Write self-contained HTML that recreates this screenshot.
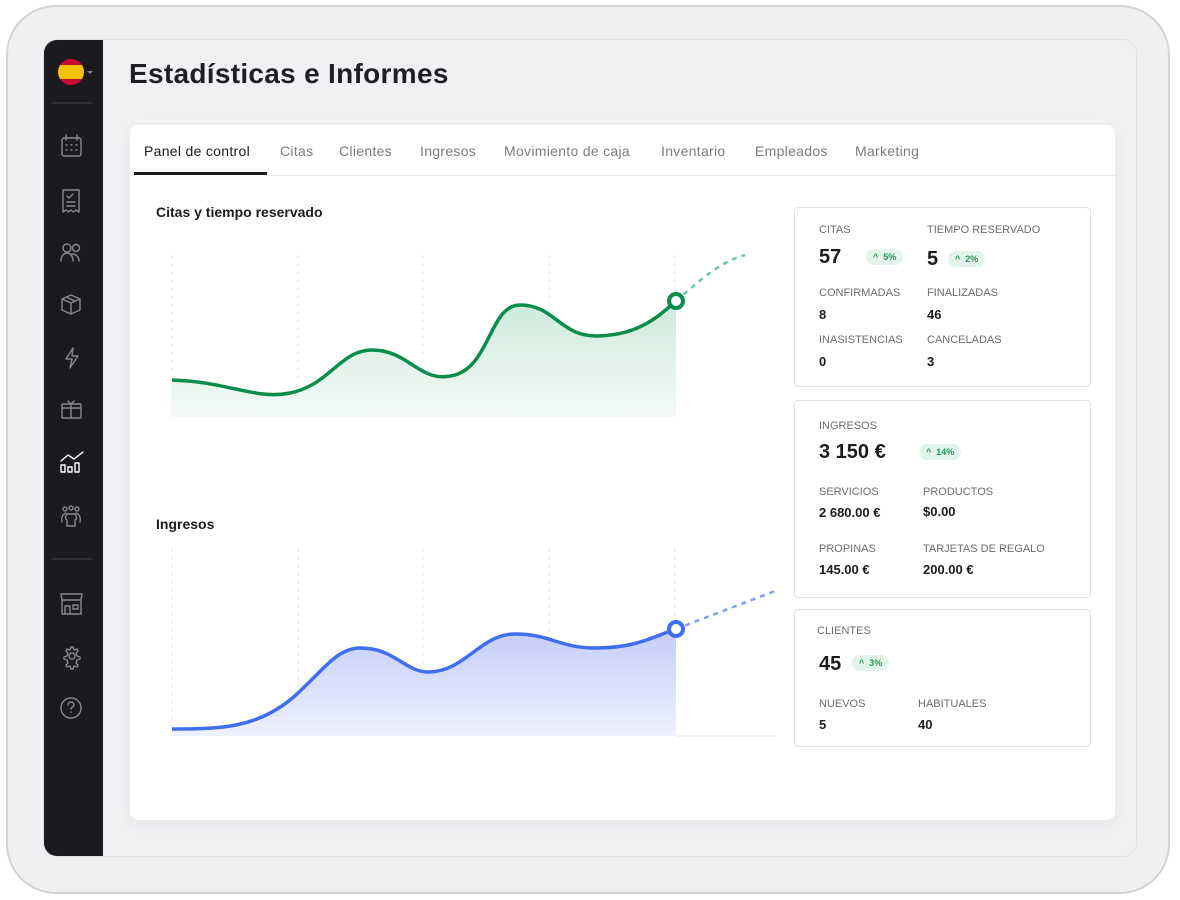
<!DOCTYPE html>
<html><head><meta charset="utf-8"><style>
*{margin:0;padding:0;box-sizing:border-box}
body{width:1180px;height:900px;background:#fff;font-family:"Liberation Sans",sans-serif;position:relative;overflow:hidden;color:#1c1b1f}
.dev{position:absolute;left:6px;top:5px;width:1164px;height:889px;border-radius:50px;background:#f1eff2;border:2px solid #d6d3d6}
.scr{position:absolute;left:43px;top:39px;width:1094px;height:818px;border-radius:14px;background:#f2f0f3;overflow:hidden;border:1px solid #e4e2e5}
.side{position:absolute;left:0;top:0;width:59px;height:818px;background:#1b1a1f}
.a{position:absolute}
h1{position:absolute;left:129px;top:58px;font-size:28px;font-weight:bold;color:#1f1e22;letter-spacing:0.3px}
.card{position:absolute;left:130px;top:125px;width:985px;height:695px;background:#fff;border-radius:8px;box-shadow:0 4px 14px rgba(0,0,0,.05)}
.tab{position:absolute;top:143px;font-size:14px;color:#7c7a80;letter-spacing:0.3px}
.box{position:absolute;left:794px;width:297px;background:#fff;border:1px solid #e2e0e3;border-radius:4px}
.l{position:absolute;font-size:11px;color:#6d6b70}
.v{position:absolute;font-size:13px;font-weight:bold;color:#1c1b1f}
.big{position:absolute;font-size:20px;font-weight:bold}
.pill{position:absolute;height:16px;border-radius:8px;background:#e3f4ea;color:#1f9a55;font-size:9px;font-weight:bold;line-height:16px;padding:0 7px}
</style></head><body>
<div class="dev"></div>
<div class="scr"><div class="side"></div></div>
<svg class="a" style="left:0;top:0" width="1180" height="900" fill="none" stroke="#8a8890" stroke-width="1.4" stroke-linecap="round" stroke-linejoin="round">
<defs><clipPath id="fc"><circle cx="71" cy="72" r="13"/></clipPath></defs>
<g clip-path="url(#fc)" stroke="none"><rect x="56" y="57" width="30" height="30" fill="#c8102e"/><rect x="56" y="65" width="30" height="14" fill="#f4c300"/></g>
<path d="M87 71l3 3 3-3z" fill="#888" stroke="none"/>
<line x1="53" y1="103" x2="91" y2="103" stroke="#444" stroke-width="1"/>
<rect x="62" y="138" width="19" height="18" rx="2"/><path d="M66 135v5M77 135v5M66 145h1M71 145h1M76 145h1M66 150h1M71 150h1M76 150h1"/>
<path d="M63 190h16v22l-3-2-2.5 2-2.5-2-2.5 2-2.5-2-3 2zM67 196l2 2 4-4M67 202h8M67 206h8"/>
<circle cx="67" cy="248" r="4"/><circle cx="76" cy="248" r="3.5"/><path d="M61 261c0-5 3-8 6-8s6 3 6 8M72 254c4 0 7 3 7 7"/>
<path d="M71 295l9 4v11l-9 4-9-4v-11zM62 299l9 4 9-4M71 303v11M66 297l9 4"/>
<path d="M73 348l-7 11h6l-2 9 8-12h-6z"/>
<rect x="62" y="404" width="19" height="14" rx="1"/><path d="M62 408h19M71 404v14M68 401l3 3 3-3"/>
<path d="M61 461l7-6 6 4 9-7" stroke="#fff"/><rect x="61" y="465" width="4" height="7" stroke="#fff"/><rect x="68" y="467" width="4" height="5" stroke="#fff"/><rect x="75" y="463" width="4" height="9" stroke="#fff"/>
<circle cx="65" cy="509" r="2"/><circle cx="71" cy="508" r="2"/><circle cx="77" cy="509" r="2"/><path d="M62 522c-1-5 1-8 4-9M80 522c1-5-1-8-4-9M67 526v-6c-2-1-2-4 0-6h8c2 2 2 5 0 6v6z"/>
<line x1="53" y1="559" x2="91" y2="559" stroke="#444" stroke-width="1"/>
<path d="M62 600v14h19v-14M61 594h21l-1 6H62zM65 614v-8h5v8M73 605h5v4h-5z"/>
<path d="M71 647l2 0 1 3 3-1 1 2-2 2 1 3 3 1v2l-3 1-1 3 2 2-1 2-3-1-1 3h-2l-1-3-3 1-1-2 2-2-1-3-3-1v-2l3-1 1-3-2-2 1-2 3 1z"/><circle cx="72" cy="656" r="3"/>
<circle cx="71" cy="708" r="10"/><path d="M68 705c0-2 1.5-3 3-3s3 1 3 3-3 2-3 4M71 712v.5"/>
</svg>
<h1>Estadísticas e Informes</h1>
<div class="card"></div>
<div class="tab" style="left:144px;color:#1c1b1f">Panel de control</div>
<div class="a" style="left:134px;top:172px;width:133px;height:3px;background:#1c1b1f"></div>
<div class="a" style="left:267px;top:175px;width:848px;height:1px;background:#ebe9ec"></div>
<div class="tab" style="left:280px">Citas</div>
<div class="tab" style="left:339px">Clientes</div>
<div class="tab" style="left:420px">Ingresos</div>
<div class="tab" style="left:504px">Movimiento de caja</div>
<div class="tab" style="left:661px">Inventario</div>
<div class="tab" style="left:755px">Empleados</div>
<div class="tab" style="left:855px">Marketing</div>
<div class="a" style="left:156px;top:204px;font-size:14px;font-weight:bold">Citas y tiempo reservado</div>
<div class="a" style="left:156px;top:516px;font-size:14px;font-weight:bold">Ingresos</div>
<svg class="a" style="left:0;top:0" width="1180" height="900">
<defs>
<linearGradient id="g1" x1="0" y1="0" x2="0" y2="1"><stop offset="0" stop-color="#cde9dc"/><stop offset="1" stop-color="#f4faf7"/></linearGradient>
<linearGradient id="g2" x1="0" y1="0" x2="0" y2="1"><stop offset="0" stop-color="#c4cdfb"/><stop offset="1" stop-color="#eef1fe"/></linearGradient>
</defs>
<g stroke="#e4e4e8" stroke-dasharray="4 4">
<path d="M172 255v162M298 255v162M423 255v162M549 255v162M675 255v162"/>
<path d="M172 548v188M298 548v188M423 548v188M549 548v188M675 548v188"/>
</g>
<path d="M172 380C230 382 255 400 290 393C330 385 340 350 372 350C410 350 420 385 455 375C490 365 490 305 520 305C555 305 560 337 598 336C640 335 660 315 676 301V417H172Z" fill="url(#g1)"/>
<path d="M172 380C230 382 255 400 290 393C330 385 340 350 372 350C410 350 420 385 455 375C490 365 490 305 520 305C555 305 560 337 598 336C640 335 660 315 676 301" fill="none" stroke="#0a8c4a" stroke-width="3.5"/>
<path d="M676 301C700 280 720 262 745 255" fill="none" stroke="#6cc7a0" stroke-width="2.5" stroke-dasharray="5 5"/>
<circle cx="676" cy="301" r="7" fill="#fff" stroke="#0a8c4a" stroke-width="4"/>
<path d="M172 729C220 729 255 728 290 700C320 675 335 648 360 648C395 648 405 672 428 672C465 672 480 634 515 634C550 634 560 648 595 648C635 648 650 638 676 629V736H172Z" fill="url(#g2)"/>
<path d="M172 729C220 729 255 728 290 700C320 675 335 648 360 648C395 648 405 672 428 672C465 672 480 634 515 634C550 634 560 648 595 648C635 648 650 638 676 629" fill="none" stroke="#3f6ef0" stroke-width="3.5"/>
<path d="M676 629L775 591" fill="none" stroke="#7f9ff2" stroke-width="2.5" stroke-dasharray="5 5"/>
<line x1="676" y1="736" x2="775" y2="736" stroke="#e8eaf2"/>
<circle cx="676" cy="629" r="7" fill="#fff" stroke="#3f6ef0" stroke-width="4"/>
</svg>
<div class="box" style="top:207px;height:180px"></div>
<div class="l" style="left:819px;top:224px">CITAS</div><div class="l" style="left:927px;top:224px">TIEMPO RESERVADO</div>
<div class="big" style="left:819px;top:246px">57</div><div class="pill" style="left:866px;top:249px">^&nbsp; 5%</div>
<div class="big" style="left:927px;top:248px">5</div><div class="pill" style="left:948px;top:251px">^&nbsp; 2%</div>
<div class="l" style="left:819px;top:287px">CONFIRMADAS</div><div class="l" style="left:927px;top:287px">FINALIZADAS</div>
<div class="v" style="left:819px;top:307px">8</div><div class="v" style="left:927px;top:307px">46</div>
<div class="l" style="left:819px;top:334px">INASISTENCIAS</div><div class="l" style="left:927px;top:334px">CANCELADAS</div>
<div class="v" style="left:819px;top:354px">0</div><div class="v" style="left:927px;top:354px">3</div>
<div class="box" style="top:400px;height:198px"></div>
<div class="l" style="left:819px;top:420px">INGRESOS</div>
<div class="big" style="left:819px;top:441px">3 150 €</div><div class="pill" style="left:919px;top:444px">^&nbsp; 14%</div>
<div class="l" style="left:819px;top:486px">SERVICIOS</div><div class="l" style="left:923px;top:486px">PRODUCTOS</div>
<div class="v" style="left:819px;top:505px">2 680.00 €</div><div class="v" style="left:923px;top:504px">$0.00</div>
<div class="l" style="left:819px;top:543px">PROPINAS</div><div class="l" style="left:923px;top:543px">TARJETAS DE REGALO</div>
<div class="v" style="left:819px;top:562px">145.00 €</div><div class="v" style="left:923px;top:562px">200.00 €</div>
<div class="box" style="top:609px;height:138px"></div>
<div class="l" style="left:817px;top:625px">CLIENTES</div>
<div class="big" style="left:819px;top:653px">45</div><div class="pill" style="left:852px;top:655px">^&nbsp; 3%</div>
<div class="l" style="left:819px;top:698px">NUEVOS</div><div class="l" style="left:918px;top:698px">HABITUALES</div>
<div class="v" style="left:819px;top:717px">5</div><div class="v" style="left:918px;top:717px">40</div>
</body></html>
